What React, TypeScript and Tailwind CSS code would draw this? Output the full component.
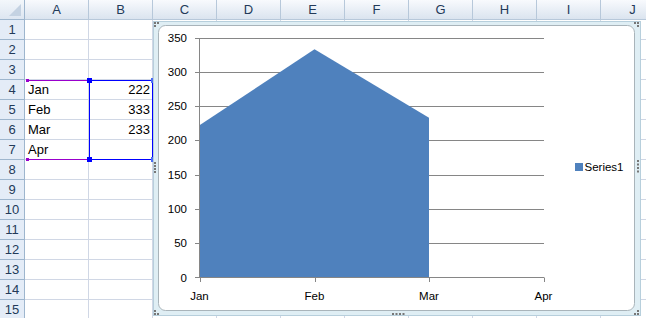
import React from "react";

const COLS = ["A", "B", "C", "D", "E", "F", "G", "H", "I", "J"];
const ROWS = Array.from({ length: 15 }, (_, i) => i + 1);
const DATA: Record<number, [string, string]> = {
  4: ["Jan", "222"],
  5: ["Feb", "333"],
  6: ["Mar", "233"],
  7: ["Apr", ""],
};

const Y0 = 277.5;
const SCALE = 240 / 350;
const yOf = (v: number) => Y0 - v * SCALE;
const XS = [199.5, 314.5, 429, 543.5];
const MONTHS = ["Jan", "Feb", "Mar", "Apr"];

function Chart() {
  const ticks = [0, 50, 100, 150, 200, 250, 300, 350];
  return (
    <svg
      className="absolute left-[153px] top-[21px]"
      width={488}
      height={295}
      viewBox="153 21 488 295"
      style={{ fontFamily: '"Liberation Sans", Arial, sans-serif' }}
    >
      <rect x={153.5} y={21.5} width={487} height={294} fill="#dfeef4" stroke="#b7cfdc" />
      <rect x={158.5} y={25.5} width={476} height={285} rx={7} fill="#ffffff" stroke="#a9b4ba" />
      {ticks.slice(1).map((t) => (
        <line key={t} x1={195} x2={544} y1={Math.round(yOf(t)) + 0.5} y2={Math.round(yOf(t)) + 0.5} stroke="#868686" strokeWidth={1} />
      ))}
      <polygon
        points={`199.5,${Y0} 199.5,${yOf(222)} 314.5,${yOf(333)} 429,${yOf(233)} 429,${Y0}`}
        fill="#4f81bd"
      />
      <line x1={199.5} x2={199.5} y1={Math.round(yOf(350)) + 0.5} y2={Y0} stroke="#868686" />
      <line x1={195} x2={199.5} y1={Y0} y2={Y0} stroke="#868686" />
      <line x1={199} x2={544} y1={Y0} y2={Y0} stroke="#868686" />
      {XS.map((x) => (
        <line key={x} x1={Math.round(x) + 0.5} x2={Math.round(x) + 0.5} y1={Y0} y2={282} stroke="#868686" />
      ))}
      {ticks.map((t) => (
        <text key={t} x={187} y={yOf(t) + 4} textAnchor="end" fontSize={11.5} fill="#000">
          {t}
        </text>
      ))}
      {MONTHS.map((m, i) => (
        <text key={m} x={XS[i]} y={300} textAnchor="middle" fontSize={11.5} fill="#000">
          {m}
        </text>
      ))}
      <rect x={575} y={163} width={8} height={8} fill="#4f81bd" />
      <text x={584.5} y={171} fontSize={11.5} fill="#000">
        Series1
      </text>
      {[
        [154, 22], [157, 22], [154, 25],
        [637, 22], [637, 25], [634, 22],
        [154, 313], [154, 310], [157, 313],
        [637, 313], [637, 310], [634, 313],
      ].map(([x, y], i) => (
        <rect key={"c" + i} x={x} y={y} width={2} height={2} fill="#777" />
      ))}
      {[0, 1, 2, 3].map((i) => (
        <rect key={"l" + i} x={154} y={162 + i * 3} width={2} height={2} fill="#777" />
      ))}
      {[0, 1, 2, 3].map((i) => (
        <rect key={"r" + i} x={637} y={160 + i * 3.5} width={2} height={2} fill="#777" />
      ))}
      {[0, 1, 2, 3].map((i) => (
        <rect key={"b" + i} x={392 + i * 3.5} y={313} width={2} height={2} fill="#777" />
      ))}
    </svg>
  );
}

function Handle({ className }: { className: string }) {
  return <div className={`absolute ${className}`} />;
}

export default function App() {
  return (
    <div
      className="relative w-[646px] h-[318px] overflow-hidden bg-white"
      style={{ fontFamily: '"Liberation Sans", Arial, sans-serif' }}
    >
      <div className="grid grid-cols-[25px_repeat(10,64px)] grid-rows-[20px_repeat(15,20px)]">
        <div className="flex items-end justify-end p-[3px] bg-gradient-to-b from-[#f3f7fb] to-[#dde6f1] border-r border-b border-[#9eb6ce]">
          <div className="w-0 h-0 border-l-[12px] border-l-transparent border-b-[12px] border-b-[#c4d2e2]" />
        </div>
        {COLS.map((c) => (
          <div
            key={c}
            className="flex items-center justify-center bg-gradient-to-b from-[#f8fafd] to-[#dbe4ef] border-r border-b border-[#b7c8da] text-[13px] text-[#233a59]"
          >
            {c}
          </div>
        ))}
        {ROWS.map((r) => (
          <React.Fragment key={r}>
            <div className="flex items-center justify-center bg-[#e4ecf7] border-r border-b border-[#9eb6ce] text-[13px] text-[#233a59]">
              {r}
            </div>
            {COLS.map((c, ci) => {
              const d = DATA[r];
              const txt = d && ci < 2 ? d[ci] : "";
              return (
                <div
                  key={c}
                  className={`flex items-center border-r border-b border-[#d0d7e5] text-[13px] text-black ${
                    ci === 1 ? "justify-end pr-[2px]" : "pl-[3px]"
                  }`}
                >
                  {txt}
                </div>
              );
            })}
          </React.Fragment>
        ))}
      </div>

      {/* range highlight: categories (purple) */}
      <div className="absolute left-[26px] top-[80px] w-[63px] h-[80px] border-y border-[#9900cc]" />
      {/* range highlight: values (blue) */}
      <div className="absolute left-[89px] top-[80px] w-[64px] h-[80px] border border-[#0000ff]" />
      <Handle className="left-[26px] top-[79px] w-[3px] h-[3px] bg-[#9900cc]" />
      <Handle className="left-[26px] top-[158px] w-[3px] h-[3px] bg-[#9900cc]" />
      <Handle className="left-[87px] top-[78px] w-[5px] h-[5px] bg-[#0000ff]" />
      <Handle className="left-[87px] top-[157px] w-[5px] h-[5px] bg-[#0000ff]" />
      <Handle className="left-[151px] top-[78px] w-[3px] h-[5px] bg-[#4a6cf5]" />
      <Handle className="left-[151px] top-[157px] w-[3px] h-[5px] bg-[#4a6cf5]" />

      <Chart />
    </div>
  );
}
